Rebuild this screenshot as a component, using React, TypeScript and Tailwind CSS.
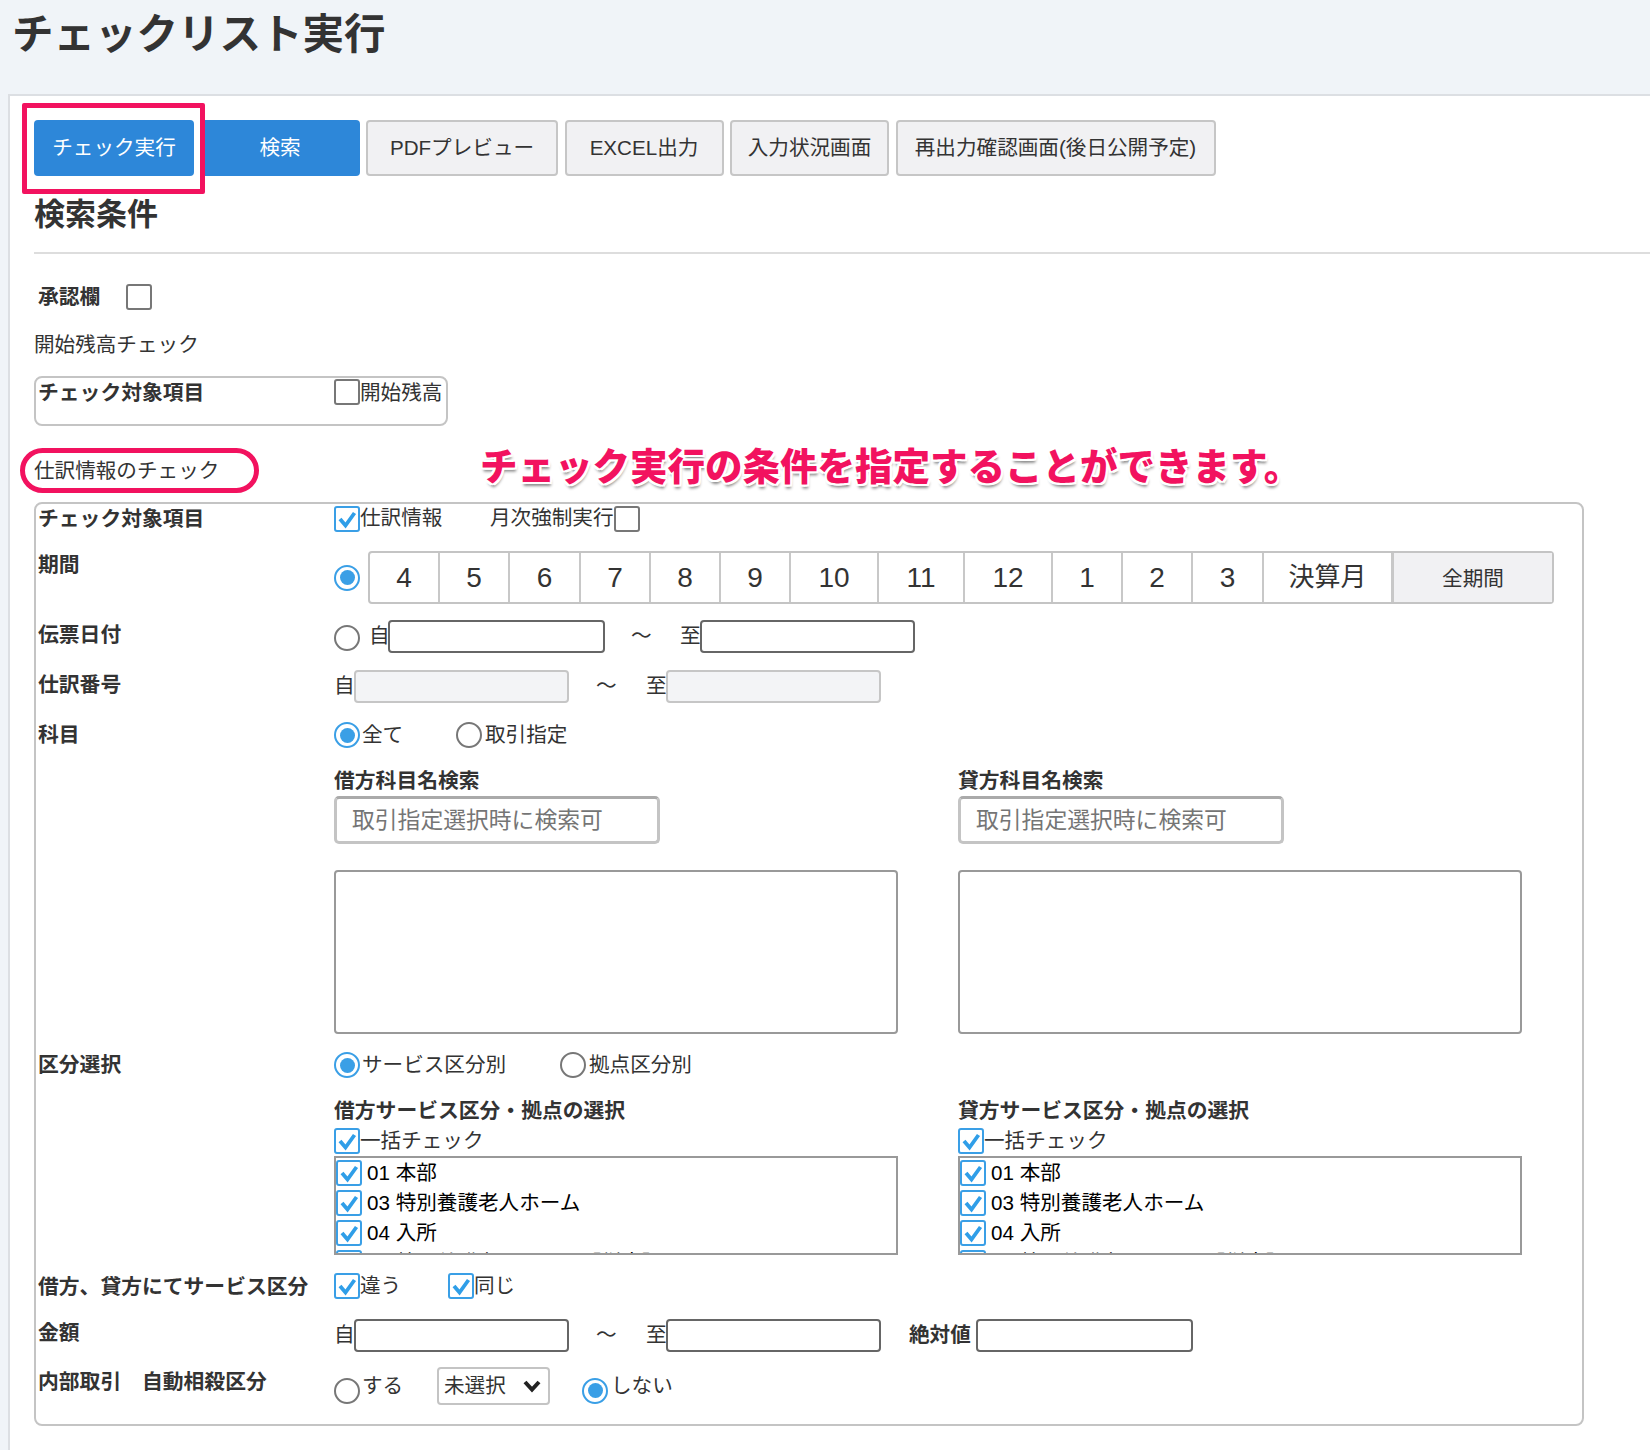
import React from "react";

function Check({ on = false, className = "" }: { on?: boolean; className?: string }) {
  return (
    <span
      className={`flex h-[26px] w-[26px] shrink-0 items-center justify-center rounded-[3px] border-2 bg-white ${
        on ? "border-[#3a9fe6]" : "border-[#777777]"
      } ${className}`}
    >
      {on && (
        <svg viewBox="0 0 22 22" className="h-[22px] w-[22px]">
          <path d="M4 11 L9.5 17.5 L18.5 5" fill="none" stroke="#2f9ee8" strokeWidth="3.8" strokeLinejoin="miter" />
        </svg>
      )}
    </span>
  );
}

function Radio({ on = false, className = "" }: { on?: boolean; className?: string }) {
  return (
    <span
      className={`flex h-[26px] w-[26px] shrink-0 items-center justify-center rounded-full border-2 bg-white ${
        on ? "border-[#3a9fe6]" : "border-[#777777]"
      } ${className}`}
    >
      {on && <span className="h-[15px] w-[15px] rounded-full bg-[#3a9fe6]" />}
    </span>
  );
}

function Label({ children, first = false }: { children: React.ReactNode; first?: boolean }) {
  return (
    <div
      className={`h-[28px] w-[298px] shrink-0 pl-[2px] text-[20.8px] font-bold whitespace-nowrap ${
        first ? "leading-[30px]" : "leading-[32px]"
      }`}
    >
      {children}
    </div>
  );
}

const inputNormal = "h-[33px] rounded-[4px] border-2 border-[#666666] bg-white";
const inputDisabled = "h-[33px] rounded-[4px] border-2 border-[#c6c6c6] bg-[#f3f4f6]";

const months = [
  { t: "4", w: "w-[70px]" },
  { t: "5", w: "w-[70px]" },
  { t: "6", w: "w-[71px]" },
  { t: "7", w: "w-[70px]" },
  { t: "8", w: "w-[70px]" },
  { t: "9", w: "w-[70px]" },
  { t: "10", w: "w-[88px]" },
  { t: "11", w: "w-[86px]" },
  { t: "12", w: "w-[88px]" },
  { t: "1", w: "w-[70px]" },
  { t: "2", w: "w-[70px]" },
  { t: "3", w: "w-[71px]" },
];

const tabs = [
  { t: "PDFプレビュー", w: "w-[192px]" },
  { t: "EXCEL出力", w: "w-[159px]" },
  { t: "入力状況画面", w: "w-[159px]" },
  { t: "再出力確認画面(後日公開予定)", w: "w-[320px]" },
];

function SearchCol({ title }: { title: string }) {
  return (
    <div className="flex w-[564px] flex-col">
      <div className="h-[30px] text-[20.8px] font-bold leading-[30px]">{title}</div>
      <input
        readOnly
        placeholder="取引指定選択時に検索可"
        className="h-[48px] w-[326px] rounded-[5px] border-[3px] border-[#c4c4c4] border-t-[#aaaaaa] bg-white pl-[15px] text-[22.8px] placeholder:text-[#757575]"
      />
      <div className="mt-[26px] h-[164px] rounded-[4px] border-2 border-[#999999] bg-white" />
    </div>
  );
}

function ServiceCol({ title }: { title: string }) {
  const items = ["01 本部", "03 特別養護老人ホーム", "04 入所", "05 特別養護老人ホーム【従来】"];
  return (
    <div className="flex w-[564px] flex-col">
      <div className="h-[30px] text-[20.8px] font-bold leading-[30px]">{title}</div>
      <div className="mt-[2px] flex h-[26px] items-center text-[20.6px]">
        <Check on />
        <span className="ml-[0px]">一括チェック</span>
      </div>
      <div className="mt-[2px] flex h-[99px] flex-col gap-[4px] overflow-hidden border-2 border-[#999999] bg-white pt-[2px] text-black">
        {items.map((t) => (
          <div key={t} className="flex h-[26px] shrink-0 items-center gap-[5px] text-[20.6px] whitespace-nowrap">
            <Check on />
            <span>{t}</span>
          </div>
        ))}
      </div>
    </div>
  );
}

export default function App() {
  return (
    <div className="flex h-[1450px] w-[1650px] flex-col overflow-hidden bg-[#f0f4f8] text-[#333333] [font-family:'Liberation_Sans','Noto_Sans_CJK_JP',sans-serif]">
      <div className="h-[94px] shrink-0 pl-[12px] text-[41.5px] font-bold leading-[70px]">チェックリスト実行</div>

      <div className="ml-[8px] flex flex-1 flex-col border-l-2 border-t-2 border-[#dcdfe3] bg-white pl-[24px] pt-[24px]">
        <div className="relative flex h-[56px] gap-[6.5px] text-[20.6px]">
          <button className="flex w-[160px] items-center justify-center rounded-[4px] bg-[#2d87d9] text-white">チェック実行</button>
          <button className="flex w-[159px] items-center justify-center rounded-[4px] bg-[#2d87d9] text-white">検索</button>
          {tabs.map((b) => (
            <button
              key={b.t}
              className={`flex items-center justify-center rounded-[4px] border-2 border-[#c6c6c6] bg-[#f1f1f3] whitespace-nowrap ${b.w}`}
            >
              {b.t}
            </button>
          ))}
          <div className="absolute left-[-12px] top-[-17px] h-[91px] w-[183px] rounded-[2px] border-[5px] border-[#f2125f]" />
        </div>

        <div className="mt-[19px] h-[40px] text-[31px] font-bold leading-[40px]">検索条件</div>
        <div className="mt-[17px] h-[2px] bg-[#dddddd]" />

        <div className="mt-[30px] flex h-[26px] items-center">
          <span className="w-[92px] pl-[4px] text-[20.8px] font-bold">承認欄</span>
          <Check />
        </div>

        <div className="mt-[19px] h-[30px] text-[20.6px] leading-[31px]">開始残高チェック</div>

        <div className="mt-[17px] flex h-[50px] w-[414px] items-start rounded-[8px] border-2 border-[#c4c4c4]">
          <div className="w-[298px] shrink-0 pl-[2px] text-[20.8px] font-bold leading-[30px]">チェック対象項目</div>
          <Check className="mt-[1px]" />
          <span className="ml-[0px] text-[20.6px] leading-[30px]">開始残高</span>
        </div>

        <div className="relative mt-[29px] h-[30px] text-[20.6px] leading-[31px]">
          仕訳情報のチェック
          <div className="absolute left-[-14px] top-[-7px] h-[45px] w-[239px] rounded-full border-[5px] border-[#f2125f]" />
          <div className="absolute left-[446px] top-[-11px] text-[37.5px] font-black leading-[46px] whitespace-nowrap text-[#f2125f] [text-shadow:-2px_-2px_0_#fff,2px_-2px_0_#fff,-2px_2px_0_#fff,2px_2px_0_#fff,0_-2px_0_#fff,0_2px_0_#fff,-2px_0_0_#fff,2px_0_0_#fff,1px_4px_3px_#8a8a8a]">
            チェック実行の条件を指定することができます。
          </div>
        </div>

        <div className="mt-[17px] h-[924px] w-[1550px] rounded-[8px] border-2 border-[#c4c4c4]">
          <div className="flex h-[28px]">
            <Label first>チェック対象項目</Label>
            <div className="flex h-[28px] items-start text-[20.6px] leading-[28px]">
              <Check on className="mt-[2px]" />
              <span className="w-[130px]">仕訳情報</span>
              <span>月次強制実行</span>
              <Check className="mt-[2px]" />
            </div>
          </div>

          <div className="mt-[17px] flex">
            <Label>期間</Label>
            <div className="mt-[2px] flex items-center">
              <Radio on />
              <div className="ml-[8px] flex h-[53px] w-[1186px] rounded-[4px] border-2 border-[#c4c4c4]">
                {months.map((m) => (
                  <div key={m.t} className={`flex items-center justify-center border-r-2 border-[#c8c8c8] text-[28px] ${m.w}`}>
                    {m.t}
                  </div>
                ))}
                <div className="flex w-[130px] items-center justify-center border-r-[3px] border-[#c8c8c8] text-[26px]">決算月</div>
                <div className="flex flex-1 items-center justify-center bg-[#f1f1f3] pt-[4px] text-[20.6px]">全期間</div>
              </div>
            </div>
          </div>

          <div className="mt-[15px] flex">
            <Label>伝票日付</Label>
            <div className="mt-[1px] flex items-center text-[20.6px]">
              <Radio className="mt-[2px]" />
              <span className="ml-[9px] w-[19px]">自</span>
              <input readOnly className={`w-[217px] ${inputNormal}`} />
              <span className="ml-[26px] w-[49px]">～</span>
              <span className="w-[20px]">至</span>
              <input readOnly className={`w-[215px] ${inputNormal}`} />
            </div>
          </div>

          <div className="mt-[16px] flex">
            <Label>仕訳番号</Label>
            <div className="mt-[1px] flex items-center text-[20.6px]">
              <span className="w-[20px]">自</span>
              <input readOnly className={`w-[215px] ${inputDisabled}`} />
              <span className="ml-[27px] w-[50px]">～</span>
              <span className="w-[20px]">至</span>
              <input readOnly className={`w-[215px] ${inputDisabled}`} />
            </div>
          </div>

          <div className="mt-[16px] flex">
            <Label>科目</Label>
            <div className="flex flex-col">
              <div className="mt-[3px] flex h-[26px] items-center text-[20.6px]">
                <Radio on />
                <span className="ml-[2px] w-[94px]">全て</span>
                <Radio />
                <span className="ml-[3px]">取引指定</span>
              </div>
              <div className="mt-[18px] flex gap-[60px]">
                <SearchCol title="借方科目名検索" />
                <SearchCol title="貸方科目名検索" />
              </div>
            </div>
          </div>

          <div className="mt-[15px] flex">
            <Label>区分選択</Label>
            <div className="flex flex-col">
              <div className="mt-[3px] flex h-[26px] items-center text-[20.6px]">
                <Radio on />
                <span className="ml-[2px] w-[198px]">サービス区分別</span>
                <Radio />
                <span className="ml-[3px]">拠点区分別</span>
              </div>
              <div className="mt-[18px] flex gap-[60px]">
                <ServiceCol title="借方サービス区分・拠点の選択" />
                <ServiceCol title="貸方サービス区分・拠点の選択" />
              </div>
            </div>
          </div>

          <div className="mt-[16px] flex h-[28px]">
            <Label>借方、貸方にてサービス区分</Label>
            <div className="mt-[2px] flex h-[26px] items-center text-[20.6px]">
              <Check on />
              <span className="w-[88px]">違う</span>
              <Check on />
              <span>同じ</span>
            </div>
          </div>

          <div className="mt-[18px] flex">
            <Label>金額</Label>
            <div className="mt-[2px] flex items-center text-[20.6px]">
              <span className="w-[20px]">自</span>
              <input readOnly className={`w-[215px] ${inputNormal}`} />
              <span className="ml-[27px] w-[50px]">～</span>
              <span className="w-[20px]">至</span>
              <input readOnly className={`w-[215px] ${inputNormal}`} />
              <span className="ml-[28px] w-[67px] font-bold">絶対値</span>
              <input readOnly className={`w-[217px] ${inputNormal}`} />
            </div>
          </div>

          <div className="mt-[14px] flex">
            <Label>内部取引　自動相殺区分</Label>
            <div className="mt-[1px] flex h-[38px] items-center text-[20.6px]">
              <Radio className="mt-[9px]" />
              <span className="ml-[2px] w-[75px]">する</span>
              <div className="flex h-[38px] w-[113px] items-center justify-between rounded-[4px] border-2 border-[#c4c4c4] pl-[5px] pr-[6px]">
                <span>未選択</span>
                <svg viewBox="0 0 20 14" className="h-[14px] w-[20px]">
                  <path d="M3 3 L10 10.5 L17 3" fill="none" stroke="#222222" strokeWidth="4" />
                </svg>
              </div>
              <Radio on className="ml-[32px] mt-[9px]" />
              <span className="ml-[3px]">しない</span>
            </div>
          </div>
        </div>
      </div>
    </div>
  );
}
